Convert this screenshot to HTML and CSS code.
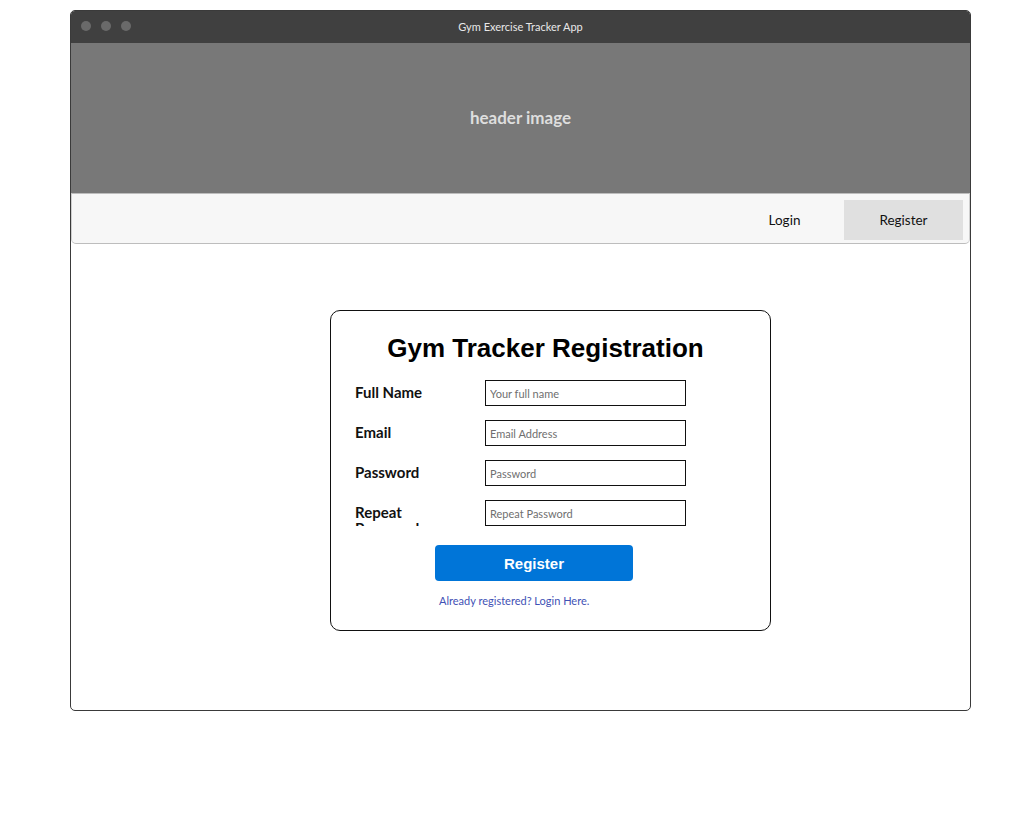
FILE: index.html
```html
<!DOCTYPE html>
<html>
<head>
<meta charset="utf-8">
<title>Gym Exercise Tracker App</title>
<link rel="stylesheet" href="styles.css">
</head>
<body>
<div class="window">
  <div class="titlebar">
    <div class="dots"><span class="dot"></span><span class="dot"></span><span class="dot"></span></div>
    <div class="title">Gym Exercise Tracker App</div>
  </div>
  <div class="header-image">header image</div>
  <nav class="nav">
    <a class="nav-item">Login</a>
    <a class="nav-item active">Register</a>
  </nav>
  <main class="main">
    <form class="card">
      <h1 class="card-title">Gym Tracker Registration</h1>
      <div class="rows">
        <div class="row"><label class="label">Full Name</label><input class="input" placeholder="Your full name"></div>
        <div class="row"><label class="label">Email</label><input class="input" placeholder="Email Address"></div>
        <div class="row"><label class="label">Password</label><input class="input" placeholder="Password"></div>
        <div class="row"><label class="label">Repeat Password</label><input class="input" placeholder="Repeat Password"></div>
      </div>
      <div class="actions">
        <button type="button" class="btn">Register</button>
        <a class="link">Already registered? Login Here.</a>
      </div>
    </form>
  </main>
</div>
</body>
</html>
```
FILE: styles.css
```css
* { box-sizing: border-box; }
html, body { margin: 0; padding: 0; background: #fff; }
body {
  font-family: "Lato", "Open Sans", "Liberation Sans", sans-serif;
  padding: 10px 61px 0 70px;
}
.window {
  width: 901px;
  height: 701px;
  border: 1px solid #3a3a3a;
  border-radius: 5px;
  display: flex;
  flex-direction: column;
  overflow: hidden;
}
.titlebar {
  height: 32px;
  background: #404040;
  display: flex;
  align-items: center;
  position: relative;
  flex: none;
}
.dots { display: flex; gap: 10px; padding-left: 10px; margin-top: -3px; }
.dot { width: 10px; height: 10px; border-radius: 50%; background: #6a6a6a; }
.title {
  position: absolute;
  left: 0; right: 0; top: 0; bottom: 0;
  display: flex; align-items: center; justify-content: center;
  color: #e8e8e8;
  font-size: 11px;
  padding-bottom: 2px;
}
.header-image {
  height: 150px;
  background: #787878;
  color: #dedede;
  font-weight: 700;
  font-size: 17px;
  display: flex;
  align-items: center;
  justify-content: center;
  padding-bottom: 2px;
  flex: none;
}
.nav {
  height: 51px;
  background: #f7f7f7;
  border: 1px solid #bdbdbd;
  border-left-color: #cfcfcf;
  border-right-color: #cfcfcf;
  border-radius: 0 0 5px 5px;
  display: flex;
  justify-content: flex-end;
  align-items: center;
  padding-right: 6px;
  padding-top: 2px;
  flex: none;
}
.nav-item {
  height: 40px;
  width: 119px;
  display: flex;
  align-items: center;
  justify-content: center;
  font-size: 13.5px;
  color: #111;
}
.active { background: #e0e0e0; }
.main {
  flex: 1;
  padding: 66px 0 0 259px;
}
.card {
  width: 441px;
  height: 321px;
  border: 1px solid #111;
  border-radius: 10px;
  padding: 21px 24px 0 24px;
}
.card-title {
  margin: 0;
  height: 32px;
  line-height: 32px;
  font-family: "Liberation Sans", Arial, sans-serif;
  font-size: 26px;
  font-weight: 700;
  text-align: center;
  color: #000;
  padding-right: 10px;
}
.rows {
  margin-top: 16px;
  display: flex;
  flex-direction: column;
  gap: 14px;
}
.row { display: flex; align-items: flex-start; height: 26px; }
.label {
  width: 130px;
  height: 26px;
  overflow: hidden;
  font-size: 15px;
  font-weight: 700;
  line-height: 16px;
  padding-top: 4px;
  color: #111;
  padding-right: 60px;
}
.input {
  width: 201px;
  height: 26px;
  border: 1px solid #111;
  border-radius: 0;
  padding: 0 4px;
  font-family: "Lato", "Open Sans", sans-serif;
  font-size: 11px;
  outline: none;
}
.input::placeholder { color: #6f6f6f; }
.actions {
  margin-top: 19px;
  padding-left: 80px;
  display: flex;
  flex-direction: column;
  align-items: flex-start;
}
.btn {
  width: 198px;
  height: 36px;
  border: none;
  border-radius: 4px;
  background: #0075d8;
  color: #fff;
  font-family: "Liberation Sans", Arial, sans-serif;
  font-size: 15px;
  font-weight: 700;
}
.link {
  margin-top: 12px;
  margin-left: 4px;
  font-size: 11px;
  line-height: 15px;
  color: #3f51b5;
}
```
